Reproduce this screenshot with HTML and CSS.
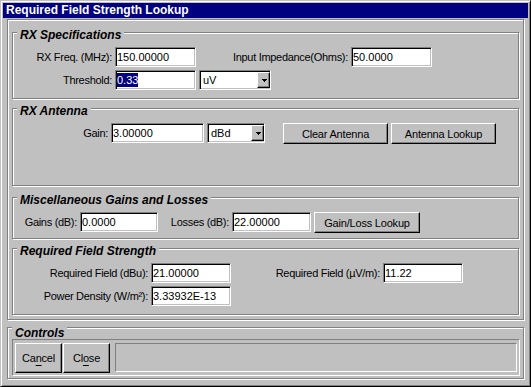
FILE: index.html
```html
<!DOCTYPE html>
<html lang="en">
<head>
    <meta charset="UTF-8">
    <meta name="viewport" content="width=device-width, initial-scale=1.0">
    <title>Required Field Strength Lookup</title>
    <link rel="stylesheet" href="styles.css">
</head>
<body>
    <div class="window">
        <div class="titlebar">Required Field Strength Lookup</div>

        <div class="panel">
            <div class="group group-spec">
                <div class="group-title">RX Specifications</div>
                <div class="row first">
                    <span class="lbl w102">RX Freq. (MHz):</span>
                    <div class="edit w81">150.00000</div>
                    <span class="lbl w155">Input Impedance(Ohms):</span>
                    <div class="edit w81">50.0000</div>
                </div>
                <div class="row">
                    <span class="lbl w102">Threshold:</span>
                    <div class="edit w81"><span class="selected">0.33</span></div>
                    <div class="combo w72"><span class="combo-text">uV</span><span class="drop"><svg width="5" height="3" viewBox="0 0 5 3" shape-rendering="crispEdges"><rect x="0" y="0" width="5" height="1"/><rect x="1" y="1" width="3" height="1"/><rect x="2" y="2" width="1" height="1"/></svg></span></div>
                </div>
            </div>

            <div class="group group-antenna">
                <div class="group-title">RX Antenna</div>
                <div class="row first">
                    <span class="lbl w98">Gain:</span>
                    <div class="edit w93">3.00000</div>
                    <div class="combo w58"><span class="combo-text">dBd</span><span class="drop"><svg width="5" height="3" viewBox="0 0 5 3" shape-rendering="crispEdges"><rect x="0" y="0" width="5" height="1"/><rect x="1" y="1" width="3" height="1"/><rect x="2" y="2" width="1" height="1"/></svg></span></div>
                    <button class="btn w105 gap-wide">Clear Antenna</button>
                    <button class="btn w105">Antenna Lookup</button>
                </div>
            </div>

            <div class="group group-misc">
                <div class="group-title">Miscellaneous Gains and Losses</div>
                <div class="row first">
                    <span class="lbl w67">Gains (dB):</span>
                    <div class="edit w78">0.0000</div>
                    <span class="lbl w74">Losses (dB):</span>
                    <div class="edit w79">22.00000</div>
                    <button class="btn w106">Gain/Loss Lookup</button>
                </div>
            </div>

            <div class="group group-req">
                <div class="group-title">Required Field Strength</div>
                <div class="row first">
                    <span class="lbl w138">Required Field (dBu):</span>
                    <div class="edit w80">21.00000</div>
                    <span class="lbl w152">Required Field (&micro;V/m):</span>
                    <div class="edit w80">11.22</div>
                </div>
                <div class="row">
                    <span class="lbl w138">Power Density (W/m&sup2;):</span>
                    <div class="edit w80">3.33932E-13</div>
                </div>
            </div>
        </div>

        <div class="group group-controls">
            <div class="group-title">Controls</div>
            <div class="toolbar">
                <button class="btn tool">Ca<u>n</u>cel</button>
                <button class="btn tool">Cl<u>o</u>se</button>
                <div class="status"></div>
            </div>
        </div>
    </div>
</body>
</html>
```

FILE: styles.css
```css
:root {
    --face: #c0c0c0;
    --shadow: #808080;
    --light: #ffffff;
    --dark: #000000;
    --navy: #000080;
    --font-ui: "Liberation Sans", Arial, sans-serif;
}

* {
    box-sizing: border-box;
}

body {
    margin: 0;
    background: var(--face);
    font-family: var(--font-ui);
    font-size: 11px;
    color: #000;
}

.window {
    width: 531px;
    height: 387px;
    padding: 2px;
    background: var(--face);
    border: 1px solid;
    border-color: var(--face) var(--dark) var(--dark) var(--face);
    box-shadow: inset 1px 1px var(--light), inset -1px -1px var(--shadow);
}

.titlebar {
    height: 15px;
    padding-left: 3px;
    background: var(--navy);
    color: #fff;
    font-weight: bold;
    font-size: 12px;
    line-height: 15px;
}

/* etched frames */
.panel,
.group {
    border: 1px solid var(--shadow);
    box-shadow: inset 1px 1px var(--light), 1px 1px var(--light);
}

.panel {
    height: 301px;
    margin: 1px 4px 0 4px;
    padding: 0 4px;
}

.group-title {
    display: table;
    margin: -4px 0 0 4px;
    padding: 0 3px;
    background: var(--face);
    font-size: 12px;
    line-height: 12px;
    font-weight: bold;
    font-style: italic;
}

.group-spec { height: 67px; margin-top: 12px; }
.group-antenna { height: 78px; margin-top: 9px; }
.group-misc { height: 42px; margin-top: 11px; }
.group-req { height: 67px; margin-top: 9px; }

.group-controls {
    height: 52px;
    margin: 7px 4px 0 4px;
}

.group-controls .group-title {
    margin-top: -1px;
}

.row {
    display: flex;
    align-items: flex-start;
    margin-top: 3px;
}

.row.first {
    margin-top: 6px;
}

.lbl {
    padding-right: 3px;
    text-align: right;
    line-height: 20px;
    letter-spacing: -0.3px;
    white-space: nowrap;
}

.edit,
.combo {
    height: 20px;
    background: #fff;
    border: 1px solid;
    border-color: var(--shadow) var(--light) var(--light) var(--shadow);
    box-shadow: inset 1px 1px var(--dark), inset -1px -1px var(--face);
    line-height: 18px;
    white-space: nowrap;
}

.edit {
    padding-left: 1px;
}

.selected {
    display: inline-block;
    line-height: 14px;
    background: var(--navy);
    color: #fff;
}

.combo {
    display: flex;
    margin-left: 3px;
}

.combo-text {
    flex: 1;
    padding-left: 3px;
}

.drop {
    width: 13px;
    height: 16px;
    margin: 1px 0;
    padding-left: 2px;
    display: flex;
    align-items: center;
    justify-content: center;
    background: var(--face);
    border: 1px solid;
    border-color: var(--light) var(--dark) var(--dark) var(--light);
    box-shadow: inset -1px -1px var(--shadow);
}

.btn {
    height: 21px;
    margin: 0 0 0 3px;
    padding: 0;
    background: var(--face);
    border: 1px solid;
    border-color: var(--light) var(--dark) var(--dark) var(--light);
    box-shadow: inset -1px -1px var(--shadow);
    font-family: var(--font-ui);
    font-size: 11px;
    letter-spacing: -0.2px;
    color: #000;
}

.btn.gap-wide {
    margin-left: 18px;
}

.btn u {
    text-underline-offset: 3px;
}

.toolbar {
    display: flex;
    height: 37px;
    margin: 0 3px 0 4px;
    padding: 3px 2px 0 2px;
    border: 1px solid;
    border-color: var(--shadow) var(--light) var(--light) var(--shadow);
}

.btn.tool {
    width: 47px;
    height: 30px;
    margin-left: 1px;
}

.btn.tool:first-child {
    margin-left: 0;
}

.status {
    flex: 1;
    height: 29px;
    margin-left: 5px;
    border: 1px solid;
    border-color: var(--shadow) var(--light) var(--light) var(--shadow);
}

.w58 { width: 58px; }
.w67 { width: 67px; }
.w72 { width: 72px; }
.w74 { width: 74px; }
.w78 { width: 78px; }
.w79 { width: 79px; }
.w80 { width: 80px; }
.w81 { width: 81px; }
.w93 { width: 93px; }
.w98 { width: 98px; }
.w102 { width: 102px; }
.w105 { width: 105px; }
.w106 { width: 106px; }
.w138 { width: 138px; }
.w152 { width: 152px; }
.w155 { width: 155px; }
```
